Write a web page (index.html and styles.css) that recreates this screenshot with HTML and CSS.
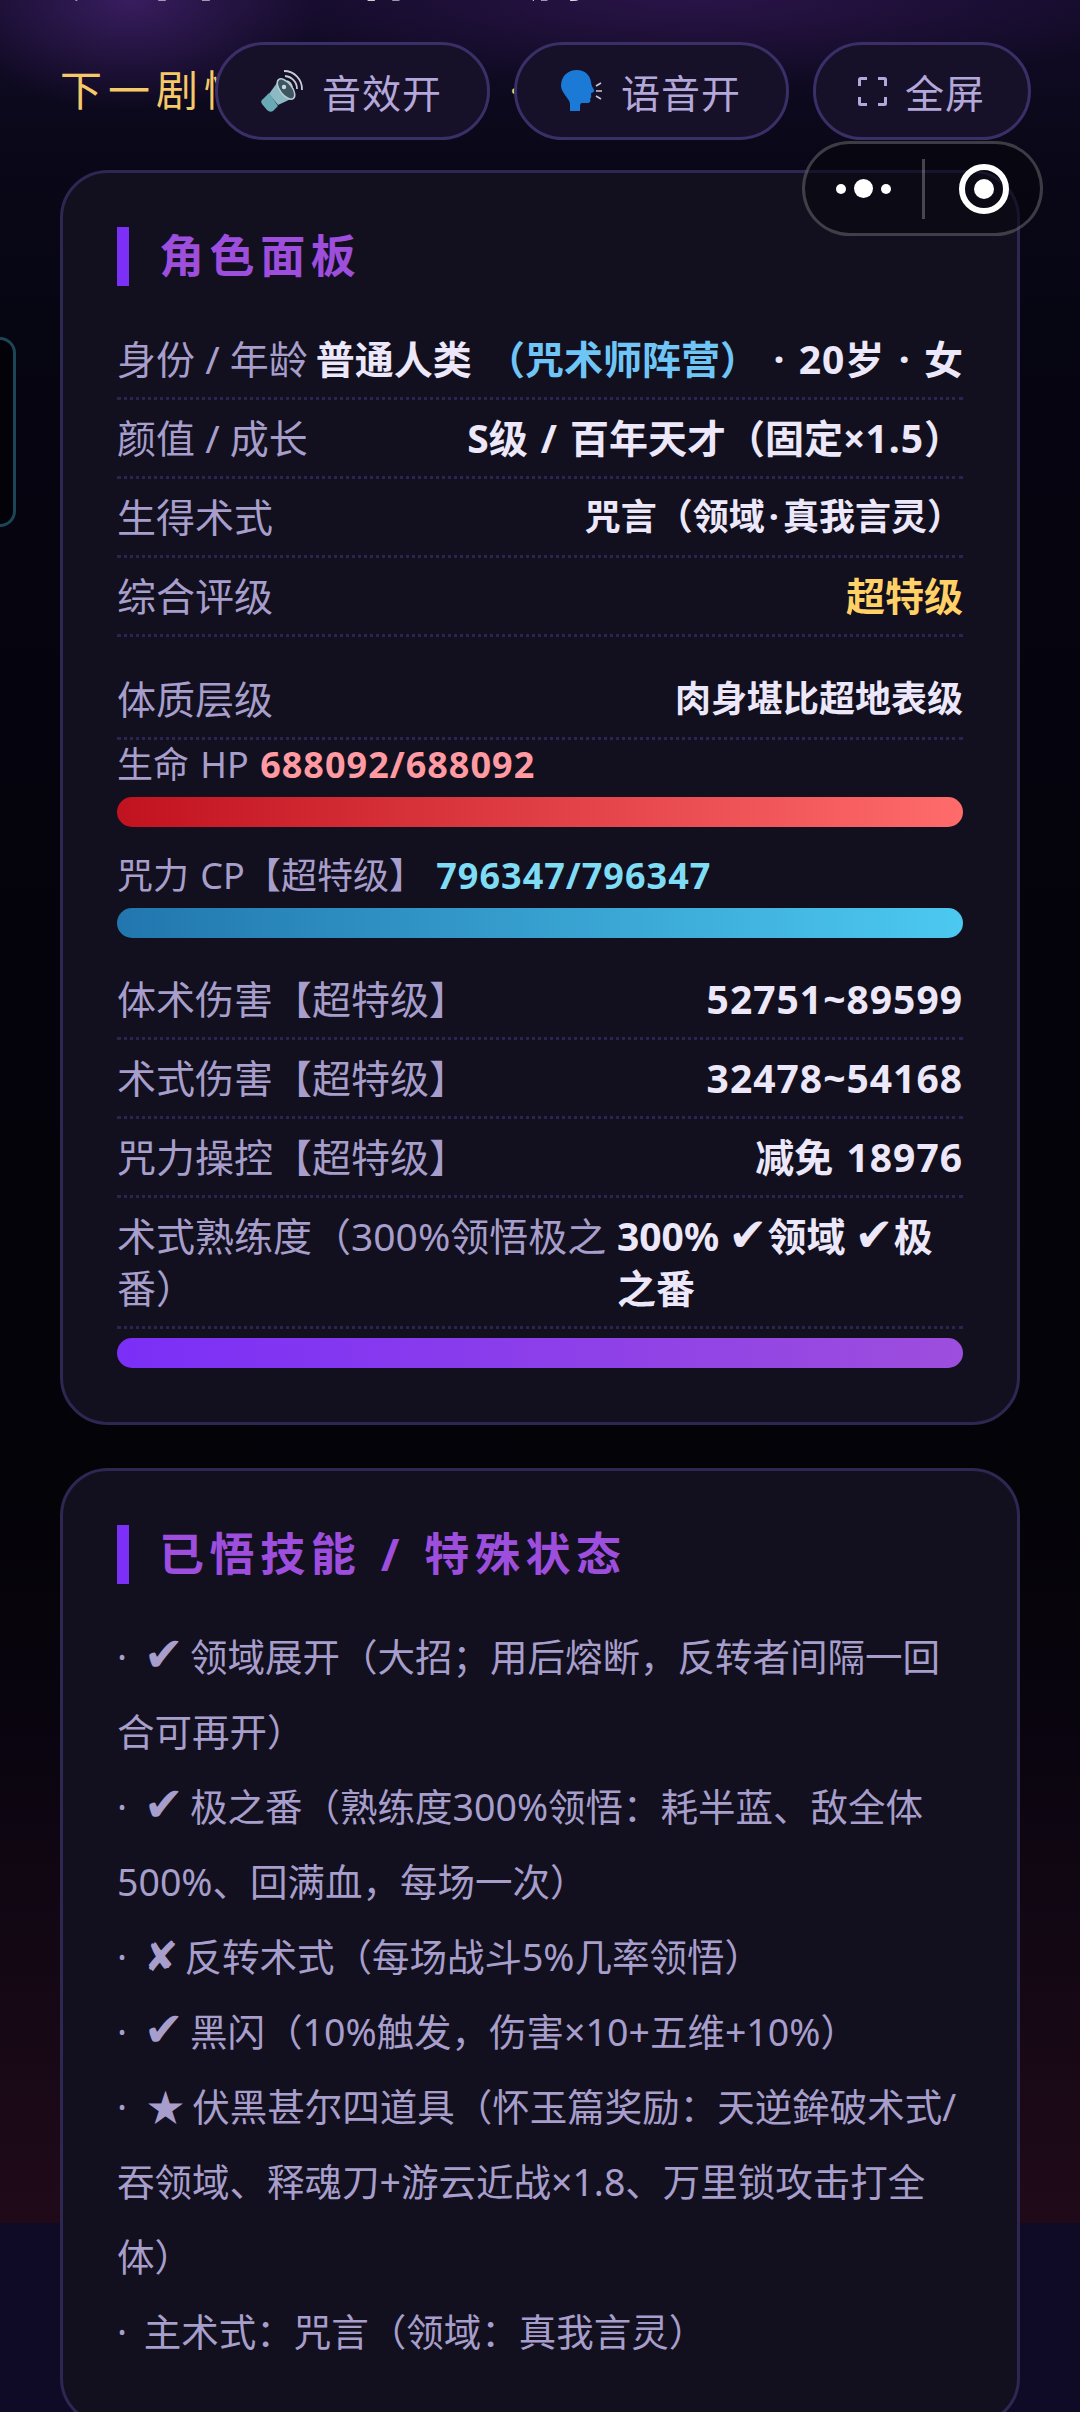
FILE: index.html
```html
<!DOCTYPE html>
<html lang="zh-CN">
<head>
<meta charset="utf-8">
<title>角色面板</title>
<link rel="stylesheet" href="styles.css">
</head>
<body>
<div class="side-tab"></div>
<div class="toolbar">
  <button class="tool"><svg class="tool-icon" viewBox="0 0 44 44"><path d="M24 2A18 18 0 0 1 42 21" class="arc"/><path d="M25 7A13 13 0 0 1 37 20" class="arc"/><path d="M27 12A8 8 0 0 1 32 18" class="arc"/><path d="M9 25L19 11L33 29L18 36Z" fill="#8db9c4"/><ellipse cx="26" cy="20" rx="12" ry="6" transform="rotate(52 26 20)" fill="#3f5661" stroke="#b5cdd4" stroke-width="1.500"/><circle cx="24" cy="18" r="2.200" fill="#c3dde3"/><path d="M9 24L18 37L13 42Q10 44 7 41L2 35Q0 32 3 30Z" fill="#69a9b6"/></svg><span>音效开</span></button>
  <button class="tool"><svg class="tool-icon" viewBox="0 0 44 44"><path d="M2 17C2 7 9 1 18 1c8 0 13 5 14 12 0 3 2 6 3 8 1 2-2 3-3 3 0 3 1 4-1 6 1 2 0 4-3 4h-5c-1 0-2 1-2 3v5H11v-7c0-3-3-6-5-9-2-3-4-6-4-9z" fill="#1b7ad6"/><path d="M37 17l5-3M37 22h6M37 27l5 3" stroke="#c9c9d6" stroke-width="1.600" fill="none"/></svg><span>语音开</span></button>
  <button class="tool tool-last"><svg class="tool-icon-small" viewBox="0 0 29 29"><path d="M1.500 9V2.500a1 1 0 0 1 1-1H9M20 1.500h6.500a1 1 0 0 1 1 1V9M27.500 20v6.500a1 1 0 0 1-1 1H20M9 27.500H2.500a1 1 0 0 1-1-1V20" fill="none" stroke="#b3a8d9" stroke-width="3"/></svg><span>全屏</span></button>
</div>
<div class="capsule">
  <div class="capsule-dots"><i class="dot"></i><i class="dot dot-big"></i><i class="dot"></i></div>
  <div class="capsule-line"></div>
  <div class="capsule-ring"><i class="ring-core"></i></div>
</div>
<main class="page">
  <h1 class="hero">咒回 · 怀玉篇</h1>
  <p class="next-line">下一剧情节点待定中 · 第三幕</p>

  <section class="card">
    <h2 class="card-title">角色面板</h2>
    <div class="row row-first"><span class="k">身份 / 年龄</span><span class="v">普通人类 <span class="c-blue">（咒术师阵营）</span> · <span class="num">20</span>岁 · 女</span></div>
    <div class="row"><span class="k">颜值 / 成长</span><span class="v">S级 / 百年天才（固定×<span class="num">1.5</span>）</span></div>
    <div class="row"><span class="k">生得术式</span><span class="v v-small">咒言（领域<span class="mid">·</span>真我言灵）</span></div>
    <div class="row"><span class="k">综合评级</span><span class="v c-gold">超特级</span></div>
    <div class="row row-body"><span class="k">体质层级</span><span class="v v-small">肉身堪比超地表级</span></div>
    <div class="meter-label">生命 HP <b class="c-pink num">688092/688092</b></div>
    <div class="bar bar-hp"></div>
    <div class="meter-label">咒力 CP【超特级】 <b class="c-cyan num">796347/796347</b></div>
    <div class="bar bar-cp"></div>
    <div class="row row-spaced"><span class="k">体术伤害【超特级】</span><span class="v num">52751~89599</span></div>
    <div class="row"><span class="k">术式伤害【超特级】</span><span class="v num">32478~54168</span></div>
    <div class="row"><span class="k">咒力操控【超特级】</span><span class="v">减免 <span class="num">18976</span></span></div>
    <div class="row row-long"><span class="k k-long">术式熟练度（300%领悟极之番）</span><span class="v v-long">300% <span class="mark">✔</span>领域 <span class="mark">✔</span>极之番</span></div>
    <div class="bar bar-xp"></div>
  </section>

  <section class="card">
    <h2 class="card-title">已悟技能 / 特殊状态</h2>
    <ul class="skills">
      <li>· <span class="mark">✔</span>领域展开（大招；用后熔断，反转者间隔一回合可再开）</li>
      <li>· <span class="mark">✔</span>极之番（熟练度300%领悟：耗半蓝、敌全体500%、回满血，每场一次）</li>
      <li>· <span class="mark mark-x">✘</span>反转术式（每场战斗5%几率领悟）</li>
      <li>· <span class="mark">✔</span>黑闪（10%触发，伤害×10+五维+10%）</li>
      <li>· <span class="mark-star">★</span>伏黑甚尔四道具（怀玉篇奖励：天逆鉾破术式/吞领域、释魂刀+游云近战×1.8、万里锁攻击打全体）</li>
      <li>· 主术式：咒言（领域：真我言灵）</li>
    </ul>
  </section>
</main>
</body>
</html>
```
FILE: styles.css
```css
* { box-sizing: border-box; }
html, body { margin: 0; height: 2412px; overflow: hidden; }
body {
  position: relative;
  font-family: "Noto Sans", "Noto Sans CJK SC", "DejaVu Sans", sans-serif;
  background-color: #0f0b26;
  background-image:
    radial-gradient(ellipse 190px 110px at 130px 0, rgba(88,44,140,.55), transparent 100%),
    radial-gradient(ellipse 480px 90px at 700px 0, rgba(70,30,110,.45), transparent 100%),
    linear-gradient(180deg, #120b28 0, #0a0818 150px, #050410 400px, #040308 1500px, #0a0510 1750px, #200a1a 2223px);
  background-size: 100% 2223px;
  background-repeat: no-repeat;
}
.page { padding: 0 60px; }
.hero {
  margin: -58px 0 0 10px;
  height: 60px;
  color: #fff;
  font-size: 60px;
  line-height: 60px;
  font-weight: 700;
  letter-spacing: 24px;
  white-space: nowrap;
}
.next-line {
  margin: 62px 0 0;
  height: 52px;
  color: #f6c968;
  font-size: 42px;
  line-height: 52px;
  letter-spacing: 6px;
  white-space: nowrap;
}
.card {
  margin-top: 43px;
  padding: 54px;
  background: #12101f;
  border: 3px solid #2e2752;
  border-radius: 48px;
}
.next-line + .card { margin-top: 54px; }
.card-title {
  margin: 0 0 35px;
  padding: 0 0 2px 30px;
  border-left: 12px solid #7b2ff7;
  color: #9d4edd;
  font-size: 45px;
  line-height: 57px;
  letter-spacing: 5.600px;
  word-spacing: 2px;
  font-weight: 700;
}
.row {
  display: flex;
  justify-content: space-between;
  gap: 12px;
  padding: 12px 0;
  border-bottom: 3px dotted #2a2450;
  font-size: 39px;
  line-height: 52px;
}
.row-first { gap: 4px; }
.row-first .v { white-space: nowrap; word-spacing: 4.200px; }
.row-first .k { white-space: nowrap; }
.row-spaced { margin-top: 23px; }
.row-body { margin-top: 24px; }
.row-long { gap: 0; }
.k { color: #a79ecb; }
.v { color: #ece8fa; font-weight: 700; word-spacing: 3px; }
.v-small { font-size: 36px; }
.num { letter-spacing: 1px; }
.mid { margin: 0 4px; }
.mark { font-size: 1.28em; line-height: 1; margin-right: 6px; }
.mark-x { font-size: 1.1em; }
.mark-star { margin-left: 3px; margin-right: 8px; line-height: 1; }
.v .mark { font-size: 1.2em; margin: 0 0 0 -4px; }
.k-long { flex: 0 0 500px; }
.v-long { flex: 0 0 346px; }
.c-blue { color: #6fc5f5; }
.c-gold { color: #ffd166; }
.c-pink { color: #ff9aa2; }
.c-cyan { color: #7fdcf5; }
.meter-label {
  color: #a79ecb;
  font-size: 36px;
  line-height: 50px;
  word-spacing: 2px;
}
.meter-label b { font-weight: 700; }
.bar { height: 30px; border-radius: 15px; margin-top: 7px; }
.bar + .meter-label { margin-top: 24px; }
.bar-hp { background: linear-gradient(90deg, #c1121f, #ff6b6b); }
.bar-cp { background: linear-gradient(90deg, #2176ae, #4cc9f0); }
.bar-xp { margin-top: 9px; background: linear-gradient(90deg, #7b2ff7, #9d4edd); }
.skills {
  margin: 0;
  padding: 0;
  list-style: none;
  color: #a79ecb;
  font-size: 37.5px;
  line-height: 75px;
  word-spacing: 7px;
}
.toolbar {
  position: absolute;
  top: 42px;
  right: 49px;
  display: flex;
  gap: 24px;
}
.tool {
  display: flex;
  align-items: center;
  gap: 18px;
  height: 98px;
  padding: 0 45px 0 42px;
  background: #171029;
  border: 3px solid #3a2f66;
  border-radius: 49px;
  color: #b3a8d9;
  font-family: inherit;
  font-size: 39px;
  letter-spacing: 1px;
  white-space: nowrap;
}
.tool-last { padding-right: 43px; }
.tool-icon { width: 44px; height: 44px; flex: none; }
.tool-icon-small { width: 29px; height: 29px; flex: none; }
.arc { fill: none; stroke: #c3ced4; stroke-width: 1.800; }
.capsule {
  position: absolute;
  top: 141px;
  left: 802px;
  width: 241px;
  height: 95px;
  display: flex;
  align-items: center;
  border: 3px solid rgba(255,255,255,.22);
  border-radius: 48px;
  background: rgba(5,5,12,.55);
}
.capsule-dots { display: flex; align-items: center; gap: 8px; margin-left: 31px; width: 87px; }
.dot { width: 10px; height: 10px; border-radius: 50%; background: #fff; }
.dot-big { width: 19px; height: 19px; }
.capsule-line { width: 3px; height: 60px; margin-left: -1px; background: rgba(255,255,255,.25); }
.capsule-ring {
  width: 50px;
  height: 50px;
  margin-left: 34px;
  border: 6px solid #fff;
  border-radius: 50%;
  display: flex;
  align-items: center;
  justify-content: center;
}
.ring-core { width: 20px; height: 20px; border-radius: 50%; background: #fff; }
.side-tab {
  position: absolute;
  top: 337px;
  left: -40px;
  width: 56px;
  height: 190px;
  border: 3px solid #1c4656;
  border-radius: 16px;
  background: #020208;
}
```
